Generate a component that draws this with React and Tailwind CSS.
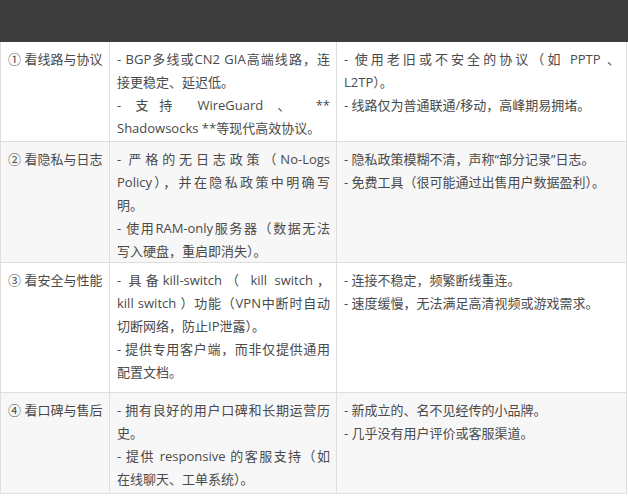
const J = "whitespace-nowrap text-justify [text-align-last:justify]";
const L = "whitespace-nowrap";

const rows = [
	{
		label: "① 看线路与协议",
		h: "h-[100px]",
		bg: "bg-white",
		good: [
			["- BGP多线或CN2 GIA高端线路，连", J],
			["接更稳定、延迟低。", L],
			["- 支持 WireGuard 、 **", J],
			["Shadowsocks **等现代高效协议。", L],
		],
		bad: [
			["- 使用老旧或不安全的协议（如 PPTP 、", J],
			["L2TP）。", L],
			["- 线路仅为普通联通/移动，高峰期易拥堵。", L],
		],
	},
	{
		label: "② 看隐私与日志",
		h: "h-[121px]",
		bg: "bg-[#f7f7f7]",
		good: [
			["- 严格的无日志政策（No-Logs", J],
			["Policy），并在隐私政策中明确写", J],
			["明。", L],
			["- 使用RAM-only服务器（数据无法", J],
			["写入硬盘，重启即消失）。", L],
		],
		bad: [
			["- 隐私政策模糊不清，声称“部分记录”日志。", L],
			["- 免费工具（很可能通过出售用户数据盈利）。", L],
		],
	},
	{
		label: "③ 看安全与性能",
		h: "h-[130px]",
		bg: "bg-white",
		good: [
			["- 具备kill-switch（ kill switch，", J],
			["kill switch ）功能（VPN中断时自动", J],
			["切断网络，防止IP泄露）。", L],
			["- 提供专用客户端，而非仅提供通用", J],
			["配置文档。", L],
		],
		bad: [
			["- 连接不稳定，频繁断线重连。", L],
			["- 速度缓慢，无法满足高清视频或游戏需求。", L],
		],
	},
	{
		label: "④ 看口碑与售后",
		h: "h-[101px]",
		bg: "bg-[#f7f7f7]",
		good: [
			["- 拥有良好的用户口碑和长期运营历", J],
			["史。", L],
			["- 提供 responsive 的客服支持（如", J],
			["在线聊天、工单系统）。", L],
		],
		bad: [
			["- 新成立的、名不见经传的小品牌。", L],
			["- 几乎没有用户评价或客服渠道。", L],
		],
	},
];

function Lines({ items }) {
	return items.map(([text, cls], i) => (
		<div key={i} className={cls}>{text}</div>
	));
}

export default function App() {
	return (
		<div
			className="w-[628px] h-[496px] overflow-hidden bg-white text-[13px] leading-[23px] text-[#4a4a4a]"
			style={{ fontFamily: '"Open Sans", "Noto Sans CJK SC", sans-serif' }}>
			{/* dark header strip */}
			<div className="h-[42px] bg-[#3c3c3c]" />

			{/* comparison table */}
			<div className="w-[627px] border-x border-[#dedede]">
				{rows.map((row, i) => (
					<div
						key={i}
						className={`grid grid-cols-[109px_227px_1fr] border-b border-[#dedede] ${row.h} ${row.bg}`}>
						<div className="border-r border-[#dedede] pl-[7px] pt-[6px] whitespace-nowrap">
							{row.label}
						</div>
						<div className="border-r border-[#dedede] pl-[7px] pr-[6px] pt-[6px]">
							<Lines items={row.good} />
						</div>
						<div className="pl-[7px] pr-[6px] pt-[6px]">
							<Lines items={row.bad} />
						</div>
					</div>
				))}
			</div>
		</div>
	);
}
